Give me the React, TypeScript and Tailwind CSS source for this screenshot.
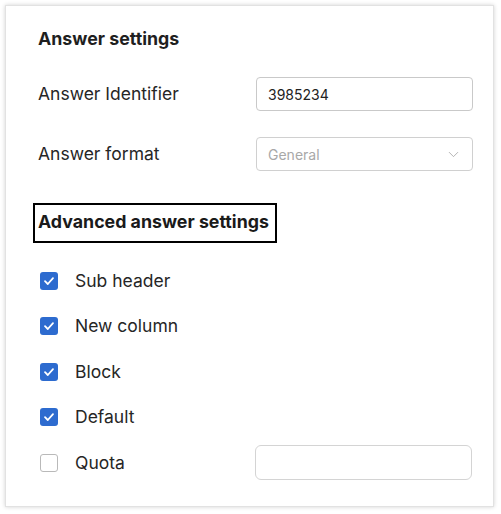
import { ChevronDown } from "lucide-react";

interface CheckRowProps {
  label: string;
  checked: boolean;
  withInput?: boolean;
}

function CheckRow({ label, checked, withInput }: CheckRowProps) {
  return (
    <div className="flex items-center h-[45.5px]">
      <div className="flex items-center w-[222px] pl-[7px]">
        {checked ? (
          <span className="w-[18px] h-[18px] rounded-[3px] bg-[#2d6bcf] flex items-center justify-center">
            <svg width="12" height="12" viewBox="0 0 12 12" fill="none">
              <path d="M2 6.2 L4.8 9 L10 3.2" stroke="white" strokeWidth="1.8" strokeLinecap="round" strokeLinejoin="round" />
            </svg>
          </span>
        ) : (
          <span className="w-[18px] h-[18px] rounded-[3px] border border-[#b9b9b9] bg-white" />
        )}
        <span className="ml-[17px] text-[17.5px] text-[#262626]">{label}</span>
      </div>
      {withInput && (
        <div className="w-[217px] h-[35px] border border-[#d4d4d4] rounded-[6px] bg-white" />
      )}
    </div>
  );
}

export default function App() {
  return (
    <div className="w-[501px] h-[514px] bg-white p-[5px]" style={{ fontFamily: "Inter, 'Noto Sans', sans-serif" }}>
      <div className="w-[489px] h-[502px] border border-[#e2e2e2] shadow-[0_0_4px_rgba(0,0,0,0.18)] bg-white pl-[32px] pt-[22px]">
        <h2 className="text-[17.8px] font-bold text-[#1f1f1f] h-[22px] leading-[22px]">Answer settings</h2>

        <div className="flex items-center mt-[27px]">
          <span className="w-[218px] text-[17.5px] text-[#262626]">Answer Identifier</span>
          <div className="w-[217px] h-[34px] border border-[#c9c9c9] rounded-[4px] flex items-center pl-[11px] text-[14px] text-[#222]">
            3985234
          </div>
        </div>

        <div className="flex items-center mt-[26px]">
          <span className="w-[218px] text-[17.5px] text-[#262626]">Answer format</span>
          <div className="w-[217px] h-[34px] border border-[#d0d0d0] rounded-[4px] flex items-center justify-between pl-[11px] pr-[10px] text-[14px] text-[#a8a8a8]">
            <span>General</span>
            <ChevronDown size={17} strokeWidth={1.1} className="text-[#a0a0a0]" />
          </div>
        </div>

        <div className="mt-[32px] inline-block border-2 border-black pl-[3px] pr-[6px] h-[40px] leading-[34px] ml-[-5px]">
          <span className="text-[17.8px] font-bold text-[#1a1a1a]">Advanced answer settings</span>
        </div>

        <div className="mt-[15px] ml-[-5px]">
          <CheckRow label="Sub header" checked />
          <CheckRow label="New column" checked />
          <CheckRow label="Block" checked />
          <CheckRow label="Default" checked />
          <CheckRow label="Quota" checked={false} withInput />
        </div>
      </div>
    </div>
  );
}
